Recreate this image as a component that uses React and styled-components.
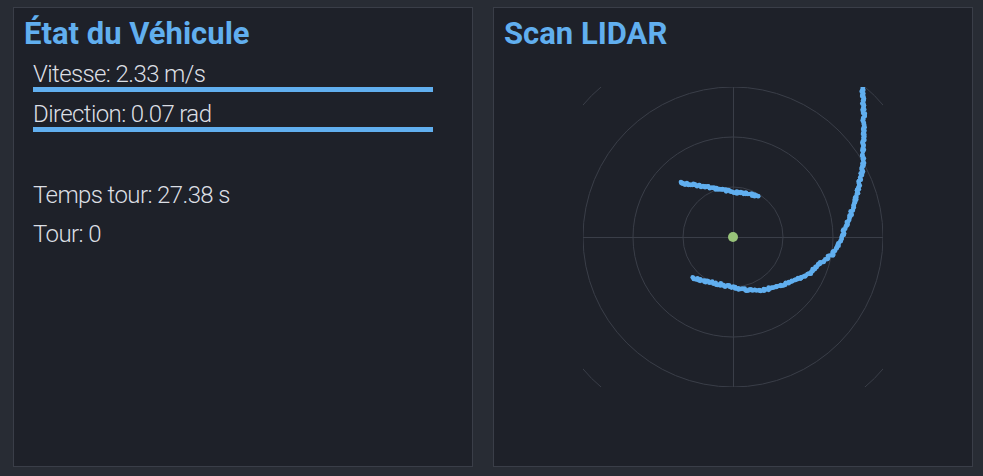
import React from 'react';
import styled, { createGlobalStyle } from 'styled-components';

const GlobalStyle = createGlobalStyle`
  html, body {
    margin: 0;
    padding: 0;
    background: #282c34;
  }
  body {
    font-family: Roboto, 'Liberation Sans', sans-serif;
  }
`;

const Dashboard = styled.div`
  display: grid;
  grid-template-columns: 460px 480px;
  gap: 20px;
  padding: 7px 10px 9px 13px;
  height: 476px;
  box-sizing: border-box;
  background: #282c34;
`;

const Panel = styled.section`
  background: #1e2129;
  border: 1px solid #3a3e48;
  padding: 8px 10px;
  box-sizing: border-box;
  height: 460px;
  display: flex;
  flex-direction: column;
  align-items: ${({ centered }) => (centered ? 'center' : 'stretch')};
`;

const Title = styled.h2`
  margin: 0;
  align-self: flex-start;
  font-size: 31px;
  line-height: 36px;
  font-weight: 700;
  color: #61afef;
`;

const Stats = styled.div`
  display: flex;
  flex-direction: column;
  padding: 10px 0 0 9px;
  color: #dcdfe4;
  font-size: 24px;
  font-weight: 300;
  letter-spacing: -0.6px;
`;

const Gauge = styled.div`
  width: 400px;
  margin-bottom: 10px;
`;

const Label = styled.div`
  line-height: 25px;
`;

const Bar = styled.div`
  height: 5px;
  background: transparent;
`;

const Fill = styled.div`
  height: 100%;
  background: #61afef;
`;

const Stat = styled.div`
  line-height: 25px;
  margin-top: ${({ gap }) => gap}px;
`;

const Radar = styled.svg`
  display: block;
  margin-top: 35px;
  overflow: hidden;
`;

const vehicle = {
  speed: 2.33,
  steering: 0.07,
  lapTime: 27.38,
  lap: 0,
};

// wall outlines in canvas coords (car at 150,150)
const walls = [
  [[97, 96], [113, 98], [130, 101], [150, 105], [165, 107], [177, 109]],
  [
    [109, 191], [130, 196], [150, 200], [164, 203], [180, 203], [197, 199],
    [214, 192], [227, 186], [237, 176], [249, 168], [255, 158], [259, 150],
    [263, 138], [267, 130], [270, 120], [274, 106], [277, 93], [280, 80],
    [280, 63], [281, 30], [280, 10], [279, 0],
  ],
];

function rand(seed) {
  const x = Math.sin(seed * 12.9898) * 43758.5453;
  return x - Math.floor(x);
}

function scanPoints() {
  const pts = [];
  let seed = 1;
  walls.forEach(line => {
    for (let i = 0; i < line.length - 1; i++) {
      const [x1, y1] = line[i];
      const [x2, y2] = line[i + 1];
      const len = Math.hypot(x2 - x1, y2 - y1);
      const steps = Math.max(1, Math.round(len / 1.2));
      for (let s = 0; s < steps; s++) {
        const t = s / steps;
        pts.push([
          x1 + (x2 - x1) * t + (rand(seed++) - 0.5) * 2.2,
          y1 + (y2 - y1) * t + (rand(seed++) - 0.5) * 2.2,
        ]);
      }
    }
  });
  return pts;
}

const points = scanPoints();

function LidarScan() {
  const grid = '#3a3e48';
  return (
    <Radar width="300" height="300" viewBox="0 0 300 300">
      {[50, 100, 150, 200].map(r => (
        <circle key={r} cx="150" cy="150" r={r} fill="none" stroke={grid} strokeWidth="1" />
      ))}
      <line x1="0" y1="150.5" x2="300" y2="150.5" stroke={grid} />
      <line x1="150.5" y1="0" x2="150.5" y2="300" stroke={grid} />
      {points.map(([x, y], i) => (
        <circle key={i} cx={x} cy={y} r="2.3" fill="#61afef" />
      ))}
      <circle cx="150" cy="150" r="5" fill="#98c379" />
    </Radar>
  );
}

export default function App() {
  return (
    <>
      <GlobalStyle />
      <Dashboard>
        <Panel>
          <Title>État du Véhicule</Title>
          <Stats>
            <Gauge>
              <Label>Vitesse: {vehicle.speed.toFixed(2)} m/s</Label>
              <Bar>
                <Fill style={{ width: `${Math.min(100, (vehicle.speed / 2) * 100)}%` }} />
              </Bar>
            </Gauge>
            <Gauge>
              <Label>Direction: {vehicle.steering.toFixed(2)} rad</Label>
              <Bar>
                <Fill style={{ width: '100%' }} />
              </Bar>
            </Gauge>
            <Stat gap={41}>Temps tour: {vehicle.lapTime.toFixed(2)} s</Stat>
            <Stat gap={14}>Tour: {vehicle.lap}</Stat>
          </Stats>
        </Panel>
        <Panel centered>
          <Title>Scan LIDAR</Title>
          <LidarScan />
        </Panel>
      </Dashboard>
    </>
  );
}
